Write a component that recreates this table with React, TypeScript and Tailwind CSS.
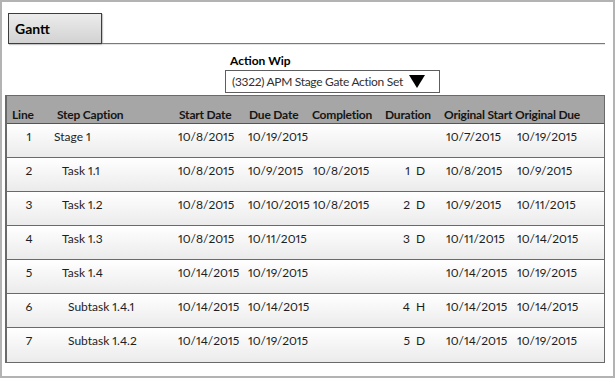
import React from "react";

interface Step {
  line: number;
  caption: string;
  level: number;
  start: string;
  due: string;
  completion?: string;
  duration?: string;
  unit?: string;
  origStart: string;
  origDue: string;
}

const steps: Step[] = [
  { line: 1, caption: "Stage 1", level: 0, start: "10/8/2015", due: "10/19/2015", origStart: "10/7/2015", origDue: "10/19/2015" },
  { line: 2, caption: "Task 1.1", level: 1, start: "10/8/2015", due: "10/9/2015", completion: "10/8/2015", duration: "1", unit: "D", origStart: "10/8/2015", origDue: "10/9/2015" },
  { line: 3, caption: "Task 1.2", level: 1, start: "10/8/2015", due: "10/10/2015", completion: "10/8/2015", duration: "2", unit: "D", origStart: "10/9/2015", origDue: "10/11/2015" },
  { line: 4, caption: "Task 1.3", level: 1, start: "10/8/2015", due: "10/11/2015", duration: "3", unit: "D", origStart: "10/11/2015", origDue: "10/14/2015" },
  { line: 5, caption: "Task 1.4", level: 1, start: "10/14/2015", due: "10/19/2015", origStart: "10/14/2015", origDue: "10/19/2015" },
  { line: 6, caption: "Subtask 1.4.1", level: 2, start: "10/14/2015", due: "10/14/2015", duration: "4", unit: "H", origStart: "10/14/2015", origDue: "10/14/2015" },
  { line: 7, caption: "Subtask 1.4.2", level: 2, start: "10/14/2015", due: "10/19/2015", duration: "5", unit: "D", origStart: "10/14/2015", origDue: "10/19/2015" },
];

const indent = ["pl-[3px]", "pl-[11px]", "pl-[17px]"];

const cols = "grid grid-cols-[44px_122px_70px_64px_72px_60px_72px_1fr]";

const App = () => {
  return (
    <div
      className="w-[615px] h-[378px] bg-white text-[12px] leading-[16px] text-[#1e1e1e] proportional-nums"
      style={{ fontFamily: "Lato, 'Open Sans', sans-serif" }}
    >
      <div className="w-full h-full border-2 border-[#b3b3b3] pt-[11px]">
        {/* tab strip */}
        <div className="flex items-end mr-[8px]">
          <div className="ml-[6px] w-[94px] h-[31px] border border-[#3d3d3d] bg-gradient-to-b from-[#ececec] to-[#d2d2d2] shadow-[1px_1px_1px_#c8c8c8] flex items-center pl-[6px] font-bold text-[14px] text-black">
            Gantt
          </div>
          <div className="flex-1 border-b border-[#7a7a7a] shadow-[0_1px_0_#e6e6e6]" />
        </div>

        {/* action picker */}
        <div className="flex flex-col items-start pl-[223px] mt-[9px]">
          <div className="pl-[5px] font-bold text-black">Action Wip</div>
          <div className="mt-[1px] w-[215px] h-[23px] border border-[#5e5e5e] flex items-center pl-[6px] text-[#303030]">
            <span className="tracking-[-0.3px]">(3322) APM Stage Gate Action Set</span>
            <svg width="16" height="13" viewBox="0 0 16 13" className="ml-[6px]">
              <polygon points="0,0 16,0 8,13" fill="#000" />
            </svg>
          </div>
        </div>

        {/* table */}
        <div className="ml-[3px] mt-[2px] w-[600px] border-l-2 border-r border-t border-b border-[#6a6a6a]">
          <div className={`${cols} h-[28px] items-end bg-[#a6a6a6] border-b border-[#555] font-bold text-[#151515] tracking-[-0.2px]`}>
            <div className="pl-[5px]">Line</div>
            <div className="pl-[6px]">Step Caption</div>
            <div className="pl-[6px]">Start Date</div>
            <div className="pl-[6px]">Due Date</div>
            <div className="pl-[5px]">Completion</div>
            <div className="pl-[6px]">Duration</div>
            <div className="pl-[5px] whitespace-nowrap">Original Start</div>
            <div className="pl-[4px] whitespace-nowrap">Original Due</div>
          </div>
          {steps.map((s, i) => (
            <div
              key={s.line}
              className={`${cols} h-[34px] pt-[5px] bg-gradient-to-b from-white to-[#ebebeb] ${
                i < steps.length - 1 ? "border-b border-[#6a6a6a]" : ""
              }`}
            >
              <div className="text-center">{s.line}</div>
              <div className={indent[s.level]}>{s.caption}</div>
              <div className="pl-[5px]">{s.start}</div>
              <div className="pl-[5px]">{s.due}</div>
              <div className="pl-[6px]">{s.completion}</div>
              <div className="flex">
                <span className="w-[31px] text-right">{s.duration}</span>
                <span className="ml-[6px]">{s.unit}</span>
              </div>
              <div className="pl-[7px]">{s.origStart}</div>
              <div className="pl-[6px]">{s.origDue}</div>
            </div>
          ))}
        </div>
      </div>
    </div>
  );
};

export default App;
